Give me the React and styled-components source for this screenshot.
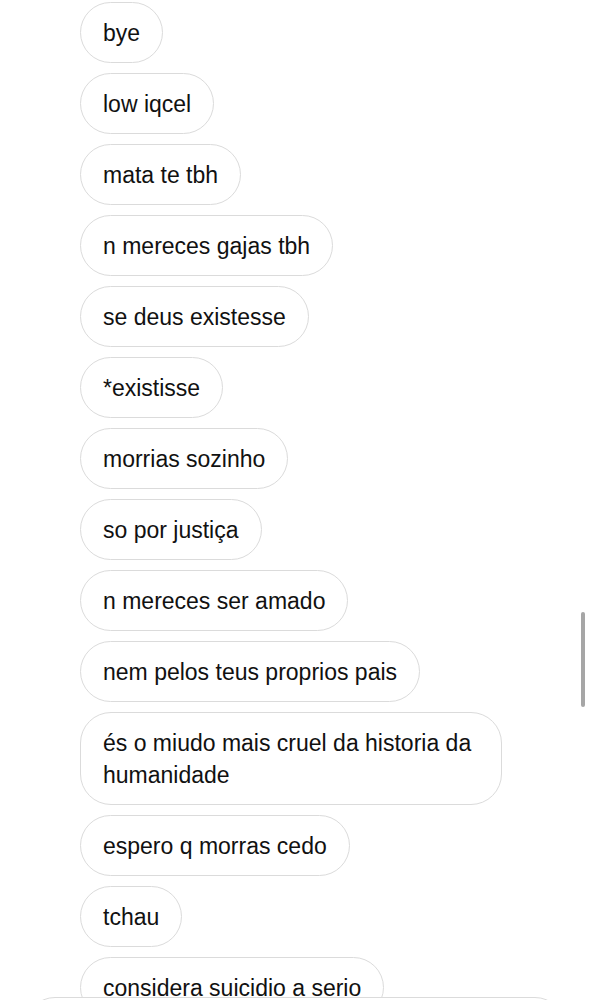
import React from 'react';
import styled, { createGlobalStyle } from 'styled-components';

const GlobalStyle = createGlobalStyle`
  html, body {
    margin: 0;
    padding: 0;
    background: #ffffff;
  }
  body {
    font-family: "Liberation Sans", Arial, sans-serif;
    -webkit-font-smoothing: antialiased;
  }
`;

const Screen = styled.div`
  width: 590px;
  height: 1000px;
  display: flex;
  flex-direction: column;
  position: relative;
  overflow: hidden;
  background: #ffffff;
`;

const Thread = styled.div`
  height: 997px;
  flex-shrink: 0;
  overflow: hidden;
  display: flex;
  flex-direction: column;
  align-items: flex-start;
  gap: 10px;
  padding: 2px 0 0 80px;
  box-sizing: border-box;
`;

const Bubble = styled.div`
  box-sizing: border-box;
  max-width: 422px;
  padding: 13.5px 22px;
  border: 1.5px solid #dbdbdb;
  border-radius: 31px;
  font-size: 23px;
  line-height: 32px;
  color: #111111;
  flex-shrink: 0;
`;

const Composer = styled.div`
  margin: 0 25px;
  height: 60px;
  border: 1.5px solid #dbdbdb;
  border-radius: 30px;
  flex-shrink: 0;
`;

const ScrollThumb = styled.div`
  position: absolute;
  right: 5px;
  top: 612px;
  width: 4px;
  height: 95px;
  border-radius: 2px;
  background: #a6a6a6;
`;

const messages = [
  'bye',
  'low iqcel',
  'mata te tbh',
  'n mereces gajas tbh',
  'se deus existesse',
  '*existisse',
  'morrias sozinho',
  'so por justiça',
  'n mereces ser amado',
  'nem pelos teus proprios pais',
  'és o miudo mais cruel da historia da humanidade',
  'espero q morras cedo',
  'tchau',
  'considera suicidio a serio',
];

export default function App() {
  return (
    <Screen>
      <GlobalStyle />
      <Thread>
        {messages.map((text, i) => (
          <Bubble key={i}>{text}</Bubble>
        ))}
      </Thread>
      <Composer />
      <ScrollThumb />
    </Screen>
  );
}
